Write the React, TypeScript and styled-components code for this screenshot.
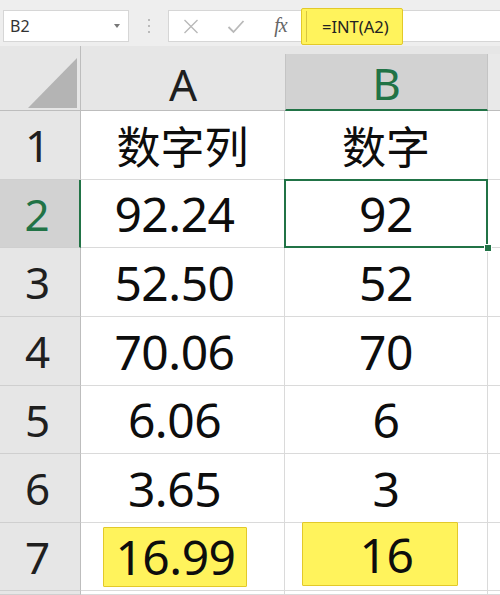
import React from 'react';
import styled, { createGlobalStyle } from 'styled-components';

const GREEN = '#217346';

const Global = createGlobalStyle`
  html, body { margin: 0; padding: 0; }
  body {
    width: 500px;
    height: 595px;
    overflow: hidden;
    background: #ffffff;
    font-family: "Noto Sans", "Noto Sans CJK SC", sans-serif;
  }
`;

const Page = styled.div`
  width: 500px;
  height: 595px;
  overflow: hidden;
  display: flex;
  flex-direction: column;
  background: #e6e6e6;
`;

const TopBar = styled.div`
  flex: none;
  height: 46px;
  box-sizing: border-box;
  padding: 10px 0 0 3px;
  display: flex;
  align-items: flex-start;
  background: #eeeeee;
`;

const NameBox = styled.div`
  width: 126px;
  height: 32px;
  box-sizing: border-box;
  background: #ffffff;
  border: 1px solid #d6d6d6;
  display: flex;
  align-items: center;
  justify-content: space-between;
  padding: 0 8px 0 6px;
  font-size: 16px;
  color: #333333;
`;

const Caret = styled.span`
  width: 0;
  height: 0;
  border-left: 3.5px solid transparent;
  border-right: 3.5px solid transparent;
  border-top: 4px solid #777777;
`;

const Dots = styled.div`
  width: 39px;
  height: 32px;
  display: flex;
  flex-direction: column;
  align-items: center;
  justify-content: center;
  gap: 4px;
`;

const Dot = styled.span`
  width: 2px;
  height: 2px;
  border-radius: 1px;
  background: #a8a8a8;
`;

const FormulaBar = styled.div`
  flex: 1;
  height: 32px;
  box-sizing: border-box;
  background: #ffffff;
  border: 1px solid #d6d6d6;
  border-right: none;
  display: flex;
  align-items: center;
`;

const IconSlot = styled.div<{ $w: number }>`
  width: ${(p) => p.$w}px;
  flex: none;
  height: 100%;
  display: flex;
  align-items: center;
  justify-content: center;
`;

const Fx = styled.span`
  font-family: "Liberation Serif", "DejaVu Serif", serif;
  font-style: italic;
  font-size: 20px;
  color: #666666;
  letter-spacing: -1px;
  margin-top: -2px;
`;

const FormulaText = styled.div`
  position: relative;
  flex: none;
  width: 102px;
  height: 37px;
  margin: -2px 0;
  box-sizing: border-box;
  background: #fff35c;
  border: 1px solid #e2c92a;
  border-radius: 2px;
  display: flex;
  align-items: center;
  padding-left: 20px;
  font-size: 16.5px;
  color: #222222;
  &::before {
    content: "";
    position: absolute;
    left: 4px;
    top: 2px;
    bottom: 2px;
    width: 1px;
    background: #d9c640;
  }
`;

const Sheet = styled.div`
  flex: 1;
  display: grid;
  grid-template-columns: 81px 204px 203px 1fr;
  grid-template-rows: 65px 69px 68px 69px 69px 68px 69px 68px 1fr;
  background: #ffffff;
`;

const Corner = styled.div`
  background: #e6e6e6;
  border-right: 1px solid #bdbdbd;
  border-bottom: 1px solid #bdbdbd;
  box-sizing: border-box;
  display: flex;
  justify-content: flex-end;
  align-items: flex-end;
  padding: 0 3px 2px 0;
`;

const Triangle = styled.span`
  width: 0;
  height: 0;
  border-left: 49px solid transparent;
  border-bottom: 50px solid #b4b4b4;
`;

const HeaderSlot = styled.div`
  background: #e6e6e6;
  display: flex;
  flex-direction: column;
  justify-content: flex-end;
`;

const ColHeader = styled.div<{ $sel?: boolean; $edge?: boolean }>`
  height: 57px;
  box-sizing: border-box;
  display: flex;
  align-items: center;
  justify-content: center;
  padding-top: 3px;
  font-size: 44px;
  color: ${(p) => (p.$sel ? GREEN : '#1f1f1f')};
  background: ${(p) => (p.$sel ? '#d2d2d2' : p.$edge ? '#e9e9e9' : '#e6e6e6')};
  border-bottom: ${(p) => (p.$sel ? `2px solid ${GREEN}` : '1px solid #bdbdbd')};
  border-left: ${(p) => (p.$sel ? '1px solid #c4c4c4' : 'none')};
  border-right: ${(p) => (p.$sel ? '1px solid #c4c4c4' : 'none')};
`;

const RowHeader = styled.div<{ $sel?: boolean }>`
  box-sizing: border-box;
  display: flex;
  align-items: center;
  justify-content: center;
  padding-right: 5px;
  font-size: 44px;
  color: ${(p) => (p.$sel ? GREEN : '#1f1f1f')};
  background: ${(p) => (p.$sel ? '#d2d2d2' : '#e6e6e6')};
  border-right: ${(p) => (p.$sel ? `2px solid ${GREEN}` : '1px solid #bdbdbd')};
  border-bottom: 1px solid #cfcfcf;
`;

const Cell = styled.div<{ $sel?: boolean; $cjk?: boolean; $shift?: number }>`
  position: relative;
  box-sizing: border-box;
  display: flex;
  align-items: center;
  justify-content: center;
  padding-right: ${(p) => p.$shift ?? 0}px;
  border-right: 1px solid #dadada;
  border-bottom: 1px solid #dadada;
  font-family: ${(p) =>
    p.$cjk ? '"Noto Sans CJK SC", "Noto Sans", sans-serif' : '"Noto Sans", sans-serif'};
  font-size: ${(p) => (p.$cjk ? 44 : 48)}px;
  letter-spacing: ${(p) => (p.$cjk ? 0 : -0.5)}px;
  color: #0d0d0d;
  ${(p) =>
    p.$sel &&
    `
    &::after {
      content: "";
      position: absolute;
      top: -1px;
      left: -1px;
      right: -1px;
      bottom: -1px;
      border: 2px solid ${GREEN};
      pointer-events: none;
    }
    &::before {
      content: "";
      position: absolute;
      right: -5px;
      bottom: -5px;
      width: 6px;
      height: 6px;
      background: ${GREEN};
      border: 1px solid #ffffff;
      z-index: 2;
    }
  `}
`;

const Highlight = styled.span<{ $w: number; $h: number; $padL?: number; $mr?: number; $mb?: number }>`
  width: ${(p) => p.$w}px;
  height: ${(p) => p.$h}px;
  box-sizing: border-box;
  display: flex;
  align-items: center;
  justify-content: center;
  padding-left: ${(p) => p.$padL ?? 0}px;
  margin-right: ${(p) => p.$mr ?? 0}px;
  margin-bottom: ${(p) => p.$mb ?? 0}px;
  background: #fff35c;
  border: 1px solid #e2c92a;
  border-radius: 1px;
`;

const EdgeCell = styled.div`
  box-sizing: border-box;
  border-bottom: 1px solid #dadada;
  background: #ffffff;
`;

type Row = { n: string; a: string; b: string; cjk?: boolean; sel?: boolean; hl?: boolean };

const rows: Row[] = [
  { n: '1', a: '数字列', b: '数字', cjk: true },
  { n: '2', a: '92.24', b: '92', sel: true },
  { n: '3', a: '52.50', b: '52' },
  { n: '4', a: '70.06', b: '70' },
  { n: '5', a: '6.06', b: '6' },
  { n: '6', a: '3.65', b: '3' },
  { n: '7', a: '16.99', b: '16', hl: true },
];

const XIcon = () => (
  <svg width="16" height="15" viewBox="0 0 16 15">
    <path d="M1.5 1 L14.5 14 M14.5 1 L1.5 14" stroke="#b9b9b9" strokeWidth="1.4" fill="none" />
  </svg>
);

const CheckIcon = () => (
  <svg width="18" height="15" viewBox="0 0 18 15">
    <path d="M1.5 8 L6.5 13 L16.5 2" stroke="#b9b9b9" strokeWidth="1.8" fill="none" />
  </svg>
);

export default function App() {
  return (
    <Page>
      <Global />
      <TopBar>
        <NameBox>
          <span>B2</span>
          <Caret />
        </NameBox>
        <Dots>
          <Dot />
          <Dot />
          <Dot />
        </Dots>
        <FormulaBar>
          <IconSlot $w={43}>
            <XIcon />
          </IconSlot>
          <IconSlot $w={48}>
            <CheckIcon />
          </IconSlot>
          <IconSlot $w={41}>
            <Fx>fx</Fx>
          </IconSlot>
          <FormulaText>=INT(A2)</FormulaText>
        </FormulaBar>
      </TopBar>
      <Sheet>
        <Corner>
          <Triangle />
        </Corner>
        <HeaderSlot>
          <ColHeader>A</ColHeader>
        </HeaderSlot>
        <HeaderSlot>
          <ColHeader $sel>B</ColHeader>
        </HeaderSlot>
        <HeaderSlot>
          <ColHeader $edge />
        </HeaderSlot>
        {rows.map((r) => (
          <React.Fragment key={r.n}>
            <RowHeader $sel={r.sel}>{r.n}</RowHeader>
            <Cell $cjk={r.cjk} $shift={r.cjk || r.hl ? 0 : 16}>
              {r.hl ? (
                <Highlight $w={144} $h={60} $padL={2} $mr={16}>
                  {r.a}
                </Highlight>
              ) : (
                r.a
              )}
            </Cell>
            <Cell $cjk={r.cjk} $sel={r.sel}>
              {r.hl ? (
                <Highlight $w={156} $h={64} $padL={14} $mr={13} $mb={5}>
                  {r.b}
                </Highlight>
              ) : (
                r.b
              )}
            </Cell>
            <EdgeCell />
          </React.Fragment>
        ))}
        <RowHeader />
        <Cell />
        <Cell />
        <EdgeCell />
      </Sheet>
    </Page>
  );
}
